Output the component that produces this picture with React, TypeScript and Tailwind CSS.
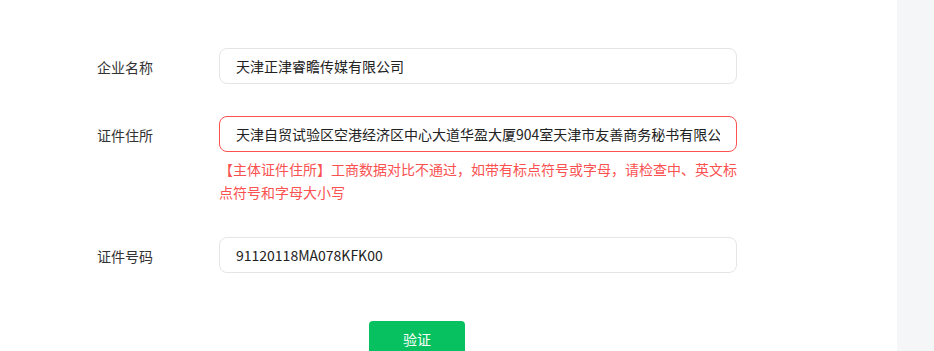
import { useState } from "react";

const font = "font-['Noto_Sans_CJK_SC','Noto_Sans',sans-serif]";

export default function App() {
  const [name, setName] = useState("天津正津睿瞻传媒有限公司");
  const [address, setAddress] = useState("天津自贸试验区空港经济区中心大道华盈大厦904室天津市友善商务秘书有限公司");
  const [code, setCode] = useState("91120118MA078KFK00");

  return (
    <div className={`flex h-[351px] overflow-hidden ${font}`}>
      <main className="flex-1 bg-white pt-12 pl-[97px]">
        <div className="flex items-center">
          <label className="w-[122px] pt-px text-sm text-[#333]">企业名称</label>
          <input
            className="h-9 w-[518px] rounded-lg border border-[#e5e5e5] px-4 text-sm text-[#222] outline-none"
            value={name}
            onChange={(e) => setName(e.target.value)}
          />
        </div>

        <div className="mt-8 flex items-center">
          <label className="w-[122px] pt-px text-sm text-[#333]">证件住所</label>
          <input
            className="h-9 w-[518px] rounded-lg border border-[#fa5151] px-4 text-sm text-[#222] outline-none"
            value={address}
            onChange={(e) => setAddress(e.target.value)}
          />
        </div>
        <p className="mt-[6px] ml-[122px] w-[518px] text-sm leading-[23px] text-[#fa5151]">
          【主体证件住所】工商数据对比不通过，如带有标点符号或字母，请检查中、英文标点符号和字母大小写
        </p>

        <div className="mt-[33px] flex items-center">
          <label className="w-[122px] pt-px text-sm text-[#333]">证件号码</label>
          <input
            className="h-9 w-[518px] rounded-lg border border-[#e5e5e5] px-4 text-sm text-[#222] outline-none"
            value={code}
            onChange={(e) => setCode(e.target.value)}
          />
        </div>

        <button className="mt-12 ml-[272px] h-9 w-24 rounded bg-[#07c160] text-sm text-white">验证</button>
      </main>
      <aside className="w-[37px] bg-[#f5f6f8]" />
    </div>
  );
}
